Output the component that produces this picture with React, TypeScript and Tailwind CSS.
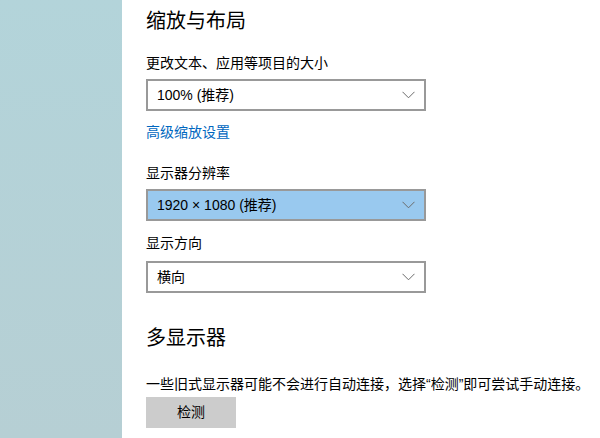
import React from "react";

const font = { fontFamily: '"Liberation Sans", "Noto Sans CJK SC", sans-serif' };

function Chevron() {
  return (
    <svg width="13" height="8" viewBox="0 0 13 8" className="shrink-0">
      <path d="M0.5 0.8 L6.5 6.8 L12.5 0.8" fill="none" stroke="#6b6b6b" strokeWidth="1" />
    </svg>
  );
}

function Select({ value, active }: { value: string; active?: boolean }) {
  return (
    <div
      className={`flex h-[32px] w-[280px] items-center justify-between border-2 border-[#999999] pl-[9px] pr-[9px] text-[14px] text-black ${
        active ? "bg-[#99c9ef]" : "bg-white"
      }`}
    >
      <span className="leading-[20px]">{value}</span>
      <Chevron />
    </div>
  );
}

export default function App() {
  return (
    <div className="flex h-[438px] w-[600px] overflow-hidden bg-white" style={font}>
      <div className="h-full w-[122px] shrink-0 bg-gradient-to-b from-[#b3d4da] to-[#b6cfd4]" />
      <div className="flex flex-col pl-[24px] text-black">
        <div className="mt-[7px] text-[20px] leading-[28px]">缩放与布局</div>
        <div className="mt-[18px] text-[14px] leading-[20px]">更改文本、应用等项目的大小</div>
        <div className="mt-[6px]">
          <Select value="100% (推荐)" />
        </div>
        <div className="mt-[11px] text-[14px] leading-[20px] text-[#0067c0]">高级缩放设置</div>
        <div className="mt-[21px] text-[14px] leading-[20px]">显示器分辨率</div>
        <div className="mt-[6px]">
          <Select value="1920 × 1080 (推荐)" active />
        </div>
        <div className="mt-[12px] text-[14px] leading-[20px]">显示方向</div>
        <div className="mt-[8px]">
          <Select value="横向" />
        </div>
        <div className="mt-[31px] text-[20px] leading-[28px]">多显示器</div>
        <div className="mt-[22px] whitespace-nowrap text-[14px] leading-[20px]">
          一些旧式显示器可能不会进行自动连接，选择“检测”即可尝试手动连接。
        </div>
        <div className="mt-[3px] flex h-[31px] w-[90px] items-center justify-center bg-[#cccccc] text-[14px]">
          检测
        </div>
      </div>
    </div>
  );
}
